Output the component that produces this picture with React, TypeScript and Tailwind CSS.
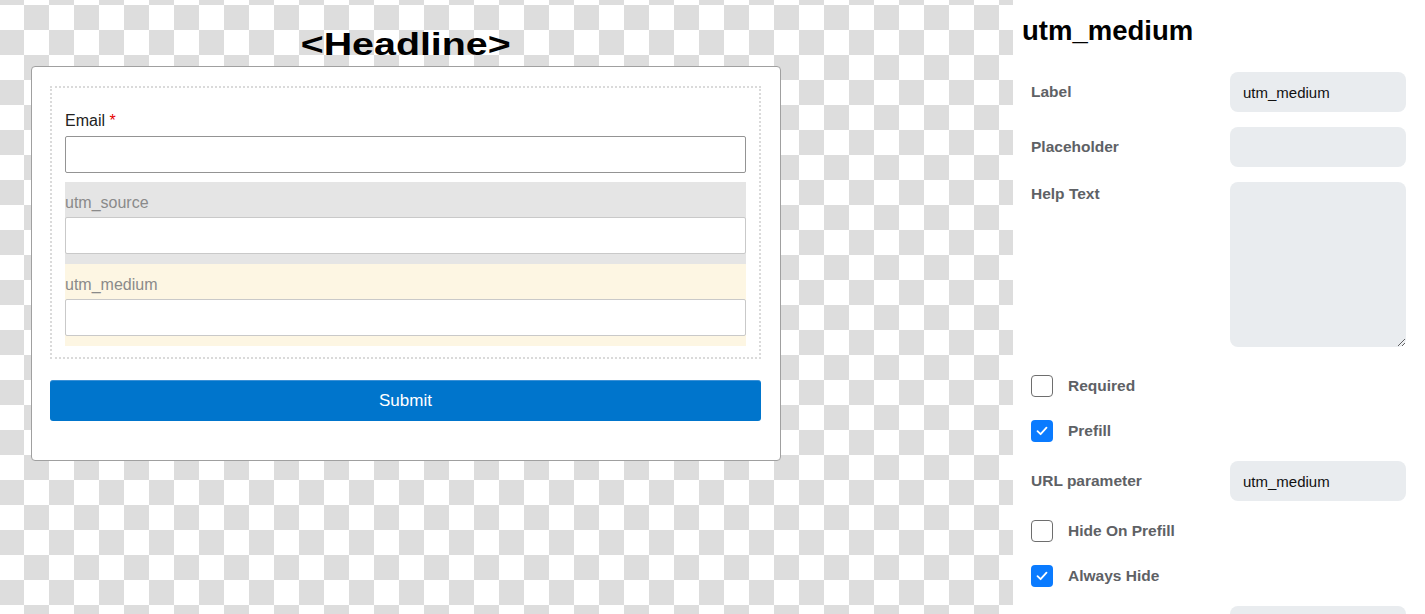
import React from 'react';

const fieldRows = [
  { type: 'input', label: 'Label', value: 'utm_medium' },
  { type: 'input', label: 'Placeholder', value: '' },
  { type: 'textarea', label: 'Help Text', value: '' },
  { type: 'check', label: 'Required', checked: false },
  { type: 'check', label: 'Prefill', checked: true },
  { type: 'input', label: 'URL parameter', value: 'utm_medium' },
  { type: 'check', label: 'Hide On Prefill', checked: false },
  { type: 'check', label: 'Always Hide', checked: true },
  { type: 'input', label: '', value: '' },
];

const Checkbox = ({ checked }: { checked: boolean }) =>
  checked ? (
    <span className="w-[22px] h-[22px] rounded-[4px] bg-[#0a7bff] flex items-center justify-center shrink-0">
      <svg width="14" height="14" viewBox="0 0 14 14" fill="none">
        <path d="M2.5 7.2 L5.6 10.2 L11.5 3.6" stroke="white" strokeWidth="1.8" strokeLinecap="round" strokeLinejoin="round" />
      </svg>
    </span>
  ) : (
    <span className="w-[22px] h-[22px] rounded-[4px] border border-[#6e6e6e] bg-white shrink-0" />
  );

const HiddenField = ({ label, bg }: { label: string; bg: string }) => (
  <div className={`pt-[12px] pb-[10px] ${bg}`}>
    <div className="text-[16px] leading-[18px] text-[#8a8a8a]">{label}</div>
    <input
      readOnly
      className="mt-[5px] block w-full h-[37px] bg-white border border-[#c9c9c9] rounded-[2px] outline-none"
    />
  </div>
);

const App = () => {
  return (
    <div className="flex w-full h-[614px] overflow-hidden font-['Liberation_Sans',Arial,sans-serif]">
      {/* Canvas with checkerboard */}
      <div className="w-[1013px] shrink-0 h-full pt-[29px] pl-[31px] bg-[image:conic-gradient(#fff_0_25%,#dddddd_0_50%,#fff_0_75%,#dddddd_0)] bg-[length:50px_50px] bg-[position:24px_5px]">
        <div className="w-[750px] h-[31px] flex justify-center">
          <h1 className="text-[31px] leading-[31px] font-bold text-black scale-x-[1.27]">&lt;Headline&gt;</h1>
        </div>

        <div className="mt-[6px] w-[750px] bg-white border border-[#a0a0a0] rounded-[4px] pl-[18px] pr-[19px] pt-[19px] pb-[39px]">
          <div className="border-2 border-dotted border-[#dadada] p-[13px] pb-[11px]">
            <div className="pt-[11px] pb-[9px]">
              <div className="text-[16px] leading-[18px] text-[#222]">
                Email <span className="text-[#e60000]">*</span>
              </div>
              <input
                readOnly
                className="mt-[6px] block w-full h-[37px] bg-white border border-[#949494] rounded-[2px] outline-none"
              />
            </div>
            <HiddenField label="utm_source" bg="bg-[#e5e5e5]" />
            <HiddenField label="utm_medium" bg="bg-[#fdf6e3]" />
          </div>

          <button className="mt-[21px] w-full h-[41px] rounded-[3px] bg-[#0075cc] border-t border-[#3a90d6] text-white text-[17px] flex items-center justify-center">
            Submit
          </button>
        </div>
      </div>

      {/* Settings panel */}
      <div className="flex-1 bg-white pt-[15px]">
        <h2 className="pl-[9px] text-[27.5px] leading-[32px] font-bold text-black">utm_medium</h2>

        <div className="mt-[25px] px-[18px] flex flex-col gap-[15px]">
          {fieldRows.map((row, i) => {
            if (row.type === 'check') {
              return (
                <div key={i} className="h-[30px] flex items-center gap-[15px]">
                  <Checkbox checked={!!row.checked} />
                  <span className="text-[15.5px] font-bold text-[#5e6165]">{row.label}</span>
                </div>
              );
            }
            if (row.type === 'textarea') {
              return (
                <div key={i} className="flex items-start">
                  <span className="w-[199px] shrink-0 text-[15.5px] leading-[24px] font-bold text-[#5e6165]">{row.label}</span>
                  <textarea
                    readOnly
                    className="block w-[176px] h-[165px] mb-[9px] rounded-[8px] bg-[#e9ecef] outline-none"
                  />
                </div>
              );
            }
            return (
              <div key={i} className="flex items-center">
                <span className="w-[199px] shrink-0 text-[15.5px] font-bold text-[#5e6165]">{row.label}</span>
                <input
                  readOnly
                  value={row.value}
                  className="w-[176px] h-[40px] rounded-[8px] bg-[#e9ecef] px-[13px] text-[15px] text-[#111] outline-none"
                />
              </div>
            );
          })}
        </div>
      </div>
    </div>
  );
};

export default App;
